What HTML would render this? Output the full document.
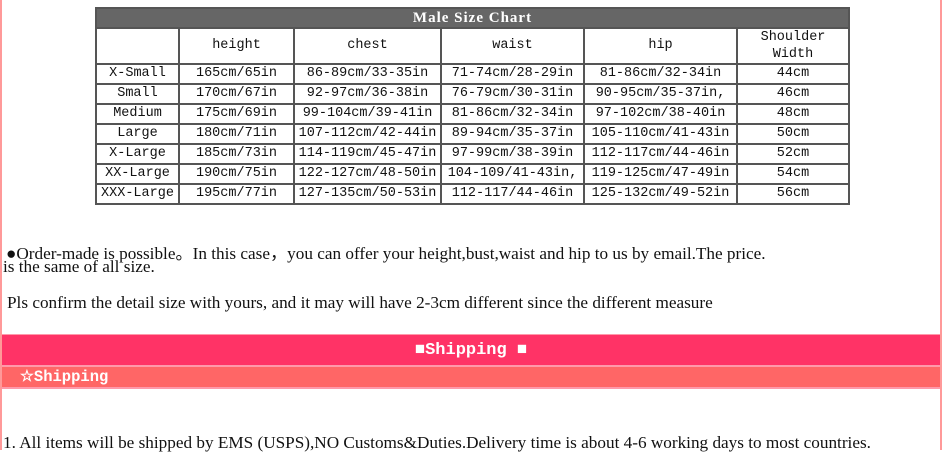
<!DOCTYPE html>
<html><head><style>
body{margin:0;width:942px;height:450px;overflow:hidden;background:#fff;position:relative;font-family:"Liberation Serif",serif;}
.lb{position:absolute;top:0;bottom:0;width:2px;background:#f99;}
table{position:absolute;left:95px;top:7px;border-collapse:collapse;font-family:"Liberation Mono",monospace;font-size:13.5px;color:#111;}
td{border:2px solid #555;text-align:center;padding:0;height:18px;line-height:18px;}
.h td{background:#666;color:#fff;font-weight:bold;height:18px;font-family:"Liberation Serif",serif;font-size:15px;letter-spacing:1px;}
.t{position:absolute;font-size:17.2px;color:#111;white-space:nowrap;}
.bar1{position:absolute;left:2px;right:2px;top:334px;height:30px;background:#ff3366;border-top:1px solid #f9a;border-bottom:2px solid #f9a;color:#fff;font-weight:bold;font-size:17px;text-align:center;line-height:31px;font-family:"Liberation Mono",monospace;}
.bar2{position:absolute;left:2px;right:2px;top:367px;height:20px;background:#ff6666;border-bottom:2px solid #f9a;color:#fff;font-weight:bold;font-size:15.5px;line-height:21px;padding-left:18px;font-family:"Liberation Mono",monospace;}
</style></head><body>
<div class="lb" style="left:0"></div><div class="lb" style="left:940px"></div>
<table>
<tr class="h"><td colspan="6" style="width:751px">Male Size Chart</td></tr>
<tr><td style="width:81px;height:34px"></td><td style="width:113px">height</td><td style="width:145px">chest</td><td style="width:141px">waist</td><td style="width:151px">hip</td><td style="width:110px;line-height:17px">Shoulder<br>Width</td></tr>
<tr><td>X-Small</td><td>165cm/65in</td><td>86-89cm/33-35in</td><td>71-74cm/28-29in</td><td>81-86cm/32-34in</td><td>44cm</td></tr>
<tr><td>Small</td><td>170cm/67in</td><td>92-97cm/36-38in</td><td>76-79cm/30-31in</td><td>90-95cm/35-37in,</td><td>46cm</td></tr>
<tr><td>Medium</td><td>175cm/69in</td><td>99-104cm/39-41in</td><td>81-86cm/32-34in</td><td>97-102cm/38-40in</td><td>48cm</td></tr>
<tr><td>Large</td><td>180cm/71in</td><td>107-112cm/42-44in</td><td>89-94cm/35-37in</td><td>105-110cm/41-43in</td><td>50cm</td></tr>
<tr><td>X-Large</td><td>185cm/73in</td><td>114-119cm/45-47in</td><td>97-99cm/38-39in</td><td>112-117cm/44-46in</td><td>52cm</td></tr>
<tr><td>XX-Large</td><td>190cm/75in</td><td>122-127cm/48-50in</td><td>104-109/41-43in,</td><td>119-125cm/47-49in</td><td>54cm</td></tr>
<tr><td>XXX-Large</td><td>195cm/77in</td><td>127-135cm/50-53in</td><td>112-117/44-46in</td><td>125-132cm/49-52in</td><td>56cm</td></tr>
</table>
<div class="t" style="left:6px;top:239px">●Order-made is possible。In this case，you can offer your height,bust,waist and hip to us by email.The price.</div>
<div class="t" style="left:3px;top:257px">is the same of all size.</div>
<div class="t" style="left:7px;top:293px">Pls confirm the detail size with yours, and it may will have 2-3cm different since the different measure</div>
<div class="bar1">■Shipping ■</div>
<div class="bar2">☆Shipping</div>
<div class="t" style="left:3px;top:433px">1. All items will be shipped by EMS (USPS),NO Customs&amp;Duties.Delivery time is about 4-6 working days to most countries.</div>
</body></html>
